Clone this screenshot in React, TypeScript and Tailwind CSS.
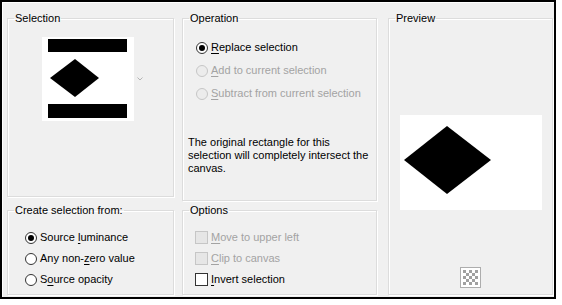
const font = { fontFamily: '"Liberation Sans", Arial, sans-serif' };

type Opt = { pre: string; key: string; post: string; checked?: boolean; disabled?: boolean };

const Label = ({ o }: { o: Opt }) => (
  <span className={o.disabled ? "text-[#a3a3a3]" : "text-black"}>
    {o.pre}
    <span className="underline underline-offset-[2px]">{o.key}</span>
    {o.post}
  </span>
);

const Radio = ({ o }: { o: Opt }) => (
  <div className="flex items-center h-[13px] gap-[3px]">
    <span
      className={
        "w-[12px] h-[12px] rounded-full border flex items-center justify-center " +
        (o.disabled ? "border-[#c6c6c6] bg-[#ececec]" : "border-[#333333] bg-white")
      }
    >
      {o.checked && <span className="w-[6px] h-[6px] rounded-full bg-black" />}
    </span>
    <Label o={o} />
  </div>
);

const Check = ({ o }: { o: Opt }) => (
  <div className="flex items-center h-[13px] gap-[3px]">
    <span
      className={
        "w-[13px] h-[13px] border " +
        (o.disabled ? "border-[#c6c6c6] bg-[#e6e6e6]" : "border-[#333333] bg-white")
      }
    />
    <Label o={o} />
  </div>
);

const Group = ({
  title,
  className,
  children,
}: {
  title: string;
  className: string;
  children: React.ReactNode;
}) => (
  <fieldset
    className={
      "border border-[#dcdcdc] shadow-[inset_1px_1px_0_#ffffff,1px_1px_0_#ffffff] " + className
    }
  >
    <legend className="ml-[6px] px-[1px] leading-[13px]">{title}</legend>
    {children}
  </fieldset>
);

export default function App() {
  return (
    <div className="w-[562px] h-[305px] bg-white text-[11px] leading-[13px]" style={font}>
      <div className="w-[556px] h-[299px] border-2 border-black bg-[#f0f0f0] shadow-[inset_1px_1px_0_#ffffff] pl-[5px] pt-[10px] flex gap-[8px]">
        {/* left column */}
        <div className="flex flex-col gap-[7px] w-[167px]">
          <Group title="Selection" className="h-[185px]">
            <div className="flex items-center mt-[12px] ml-[34px]">
              <svg width="92" height="84" viewBox="0 0 92 84">
                <rect width="92" height="84" fill="#fff" />
                <rect x="6" y="2" width="79" height="13" fill="#000" />
                <rect x="6" y="67" width="79" height="14" fill="#000" />
                <polygon points="8,41 33,22 57,41 33,60" fill="#000" />
              </svg>
              <svg width="6" height="4" viewBox="0 0 6 4" className="ml-[3px]">
                <path d="M0.5 0.5 L3 3 L5.5 0.5" stroke="#b4b4b4" fill="none" />
              </svg>
            </div>
          </Group>
          <Group title="Create selection from:" className="h-[91px]">
            <div className="flex flex-col gap-[8px] mt-[14px] ml-[17px]">
              <Radio o={{ pre: "Source ", key: "l", post: "uminance", checked: true }} />
              <Radio o={{ pre: "Any non-", key: "z", post: "ero value" }} />
              <Radio o={{ pre: "S", key: "o", post: "urce opacity" }} />
            </div>
          </Group>
        </div>

        {/* middle column */}
        <div className="flex flex-col gap-[3px] w-[195px]">
          <Group title="Operation" className="h-[189px]">
            <div className="flex flex-col gap-[10px] mt-[16px] ml-[13px]">
              <Radio o={{ pre: "", key: "R", post: "eplace selection", checked: true }} />
              <Radio o={{ pre: "", key: "A", post: "dd to current selection", disabled: true }} />
              <Radio o={{ pre: "", key: "S", post: "ubtract from current selection", disabled: true }} />
            </div>
            <p className="mt-[36px] ml-[5px] w-[185px]">
              The original rectangle for this selection will completely intersect the canvas.
            </p>
          </Group>
          <Group title="Options" className="h-[91px]">
            <div className="flex flex-col gap-[8px] mt-[14px] ml-[12px]">
              <Check o={{ pre: "", key: "M", post: "ove to upper left", disabled: true }} />
              <Check o={{ pre: "", key: "C", post: "lip to canvas", disabled: true }} />
              <Check o={{ pre: "", key: "I", post: "nvert selection" }} />
            </div>
          </Group>
        </div>

        {/* right column */}
        <div className="w-[165px] ml-[3px]">
          <Group title="Preview" className="h-[283px]">
            <svg width="142" height="95" viewBox="0 0 142 95" className="mt-[90px] ml-[11px] block">
              <rect width="142" height="95" fill="#fff" />
              <polygon points="4,45 47,11 91,45 47,79" fill="#000" />
            </svg>
            <svg width="21" height="21" viewBox="0 0 21 21" className="mt-[57px] ml-[71px] block">
              <rect x="0.5" y="0.5" width="20" height="20" fill="#fff" stroke="#adadad" />
              {[0, 1, 2, 3, 4].map((r) =>
                [0, 1, 2, 3, 4].map((c) =>
                  (r + c) % 2 === 0 ? (
                    <rect key={r + "-" + c} x={3 + c * 3} y={3 + r * 3} width="3" height="3" fill="#a0a0a0" />
                  ) : null
                )
              )}
            </svg>
          </Group>
        </div>
      </div>
    </div>
  );
}
